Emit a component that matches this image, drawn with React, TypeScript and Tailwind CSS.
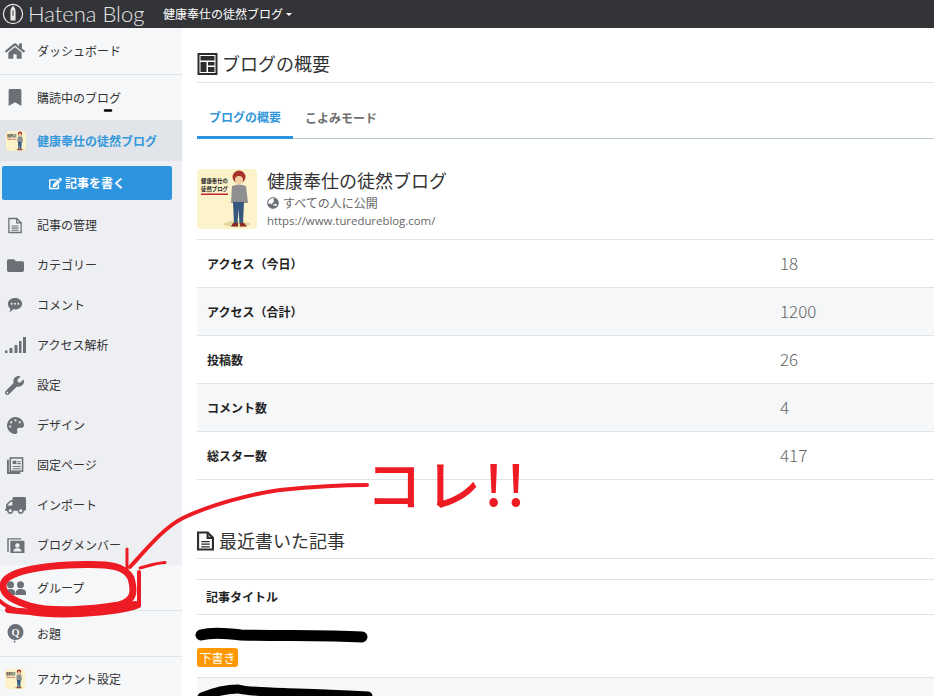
import type { ReactNode } from 'react';
import { FaHome, FaBookmark, FaFolder, FaWrench, FaPalette, FaTruck, FaGlobeAsia, FaEdit } from 'react-icons/fa';

const font = "font-['Noto_Sans_CJK_JP','Noto_Sans',sans-serif]";

function Avatar({ size }: { size: string }) {
  return (
    <svg viewBox="0 0 60 60" className={`${size} rounded shrink-0`}>
      <rect width="60" height="60" fill="#fdf3cb" />
      <text x="4" y="14" fontSize="5.400" fontWeight="700" fill="#222" fontFamily="Noto Sans CJK JP">健康奉仕の</text>
      <text x="4" y="21.500" fontSize="5.400" fontWeight="700" fill="#222" fontFamily="Noto Sans CJK JP">徒然ブログ</text>
      <rect x="4" y="24.500" width="27" height="1.500" fill="#c0272d" />
      <ellipse cx="40" cy="55" rx="13" ry="3" fill="#dfd79a" />
      <circle cx="42" cy="8" r="6.500" fill="#a8322a" />
      <circle cx="42" cy="11" r="4" fill="#f3cfa8" />
      <path d="M35 17q7-3 14 0l2 17h-17z" fill="#8f8f8f" />
      <path d="M36 33h11l-1 22h-3.500l-1-15-1 15h-3.500z" fill="#36587f" />
      <path d="M36 54h5v3.500h-7zM43 54h4l3 3.500h-7z" fill="#8e2a25" />
    </svg>
  );
}

function DocIcon({ className, weight }: { className: string; weight: number }) {
  return (
    <svg viewBox="0 0 16 18" className={className} fill="none" stroke="currentColor" strokeWidth={weight}>
      <path d="M1 1h9l5 5v11H1z" />
      <path d="M10 1v5h5" />
      <path d="M4 9.500h8M4 12h8M4 14.500h8" strokeWidth="1.200" />
    </svg>
  );
}

function LayoutIcon() {
  return (
    <svg viewBox="0 0 20 22" className="w-[21px] h-[22px] text-[#2d2d2d]">
      <rect x="1" y="1" width="18" height="20" fill="none" stroke="currentColor" strokeWidth="2" />
      <path d="M3 3h14v4.500H3zM3 9h6v10H3zM10.500 9h6.500v3.500h-6.500zM10.500 14h6.500v5h-6.500z" fill="currentColor" />
    </svg>
  );
}

function CommentIcon() {
  return (
    <svg viewBox="0 0 18 18" className="w-[16px] h-[16px] ml-[2px]">
      <path d="M9 1c4.700 0 8 2.900 8 6.500S13.700 14 9 14c-.8 0-1.500-.1-2.200-.2C5.700 15.300 4 16.500 2.500 17c.8-1.100 1.200-2.300 1.200-4C2 11.800 1 9.800 1 7.500 1 3.900 4.300 1 9 1z" fill="currentColor" />
      <circle cx="5.300" cy="7.500" r="1.100" fill="#eeeff2" />
      <circle cx="9" cy="7.500" r="1.100" fill="#eeeff2" />
      <circle cx="12.700" cy="7.500" r="1.100" fill="#eeeff2" />
    </svg>
  );
}

function SignalIcon() {
  return (
    <svg viewBox="0 0 21 16" className="w-[21px] h-[16px]" fill="currentColor">
      <rect x="0" y="13.500" width="2.500" height="2.500" />
      <rect x="4.500" y="11" width="3" height="5" />
      <rect x="9.500" y="8" width="3" height="8" />
      <rect x="14" y="4" width="2.500" height="12" />
      <rect x="18" y="0" width="3" height="16" />
    </svg>
  );
}

function PagesIcon() {
  return (
    <svg viewBox="0 0 18 18" className="w-[17px] h-[17px] ml-[2px]" fill="none" stroke="currentColor">
      <path d="M1 3v14h13" strokeWidth="2" />
      <rect x="3.500" y="1" width="13" height="14" strokeWidth="1.600" />
      <rect x="6" y="4" width="4" height="3.500" fill="currentColor" stroke="none" />
      <path d="M11 5h3.500M11 7h3.500M6 10h8.500M6 12.500h8.500" strokeWidth="1.100" />
    </svg>
  );
}

function MemberIcon() {
  return (
    <svg viewBox="0 0 19 17" className="w-[18px] h-[16px] ml-[2px]" fill="none" stroke="currentColor">
      <path d="M1 16V2h14" strokeWidth="1.500" />
      <rect x="3.500" y="4" width="15" height="13" fill="currentColor" stroke="none" />
      <circle cx="11" cy="9" r="2.400" fill="#eeeff2" stroke="none" />
      <path d="M6.500 15.500c.5-3 2.500-3.500 4.500-3.500s4 .5 4.500 3.500z" fill="#eeeff2" stroke="none" />
    </svg>
  );
}

function GroupIcon() {
  return (
    <svg viewBox="0 0 21 14" className="w-[21px] h-[14px]" fill="currentColor">
      <circle cx="5.500" cy="3.800" r="3.500" />
      <circle cx="15.500" cy="3.800" r="3.500" />
      <path d="M0 14v-2.500C0 9 2.500 8 5.500 8S10 9 10.300 11.500V14zM10.700 14v-2.500C11 9 12.500 8 15.500 8s5.500 1 5.500 3.500V14z" />
    </svg>
  );
}

function OdaiIcon() {
  return (
    <svg viewBox="0 0 18 20" className="w-[17px] h-[19px] ml-[2px]">
      <circle cx="9" cy="8.500" r="8.500" fill="currentColor" />
      <circle cx="8" cy="18.500" r="1" fill="currentColor" />
      <text x="9" y="12.500" textAnchor="middle" fontSize="11" fontWeight="700" fill="#f6f7f9" fontFamily="Liberation Serif">Q</text>
    </svg>
  );
}

function HatenaMark() {
  return (
    <svg viewBox="0 0 24 24" className="w-[22px] h-[22px] text-[#e8e8e8] shrink-0">
      <circle cx="12" cy="12" r="10.500" fill="none" stroke="currentColor" strokeWidth="1.300" />
      <path d="M12 3c2 2 2.800 4 2.800 6.500V19H9.200V9.500C9.200 7 10 5 12 3z" fill="currentColor" />
      <path d="M12 8v6" stroke="#333438" strokeWidth="1" />
    </svg>
  );
}

function NavItem({ icon, label, className }: { icon: ReactNode; label: string; className: string }) {
  return (
    <div className={`flex items-center pl-[5px] text-[12px] text-[#333] ${className}`}>
      <span className="w-[32px] shrink-0 flex items-center text-[#6b7076]">{icon}</span>
      <span>{label}</span>
    </div>
  );
}

const stats = [
  { label: 'アクセス（今日）', value: '18' },
  { label: 'アクセス（合計）', value: '1200' },
  { label: '投稿数', value: '26' },
  { label: 'コメント数', value: '4' },
  { label: '総スター数', value: '417' },
];

export default function App() {
  return (
    <div className={`relative w-[934px] h-[696px] overflow-hidden bg-white ${font}`}>
      {/* Header */}
      <header className="h-[28px] bg-[#333438] flex items-center pl-[2px] overflow-hidden">
        <HatenaMark />
        <span className="ml-[4px] w-[135px] text-[22px] leading-none font-light text-[#e4e4e4] font-['Lato',sans-serif]">
          Hatena Blog
        </span>
        <span className="text-[12px] text-white">健康奉仕の徒然ブログ</span>
        <span className="ml-[3px] border-x-[3px] border-t-[3px] border-x-transparent border-t-white" />
      </header>

      <div className="flex h-[668px]">
        {/* Sidebar */}
        <aside className="w-[182px] shrink-0 bg-[#f6f7f9]">
          <NavItem className="h-[47px] border-b border-[#dfe3e6]" icon={<FaHome className="w-[20px] h-[18px]" />} label="ダッシュボード" />
          <NavItem className="h-[45px]" icon={<FaBookmark className="w-[14px] h-[17px] ml-[3px]" />} label="購読中のブログ" />
          <div className="h-[41px] bg-[#e1e5e9] flex items-center pl-[6px] text-[12px] font-bold text-[#3598db]">
            <span className="w-[31px]"><Avatar size="w-[20px] h-[20px]" /></span>
            健康奉仕の徒然ブログ
          </div>
          <div className="bg-[#eeeff2]">
            <div className="px-[2px] pt-[5px] pb-[5px]">
              <div className="w-[170px] h-[34px] bg-[#2d95df] rounded-[2px] flex items-center justify-center gap-[3px] text-[12px] font-bold text-white">
                <FaEdit className="w-[13px] h-[13px]" />
                記事を書く
              </div>
            </div>
            <NavItem className="h-10" icon={<DocIcon weight={1.5} className="w-[14px] h-[17px] ml-[3px]" />} label="記事の管理" />
            <NavItem className="h-10" icon={<FaFolder className="w-[19px] h-[17px] ml-[1px]" />} label="カテゴリー" />
            <NavItem className="h-10" icon={<CommentIcon />} label="コメント" />
            <NavItem className="h-10" icon={<SignalIcon />} label="アクセス解析" />
            <NavItem className="h-10" icon={<FaWrench className="w-[19px] h-[19px]" />} label="設定" />
            <NavItem className="h-10" icon={<FaPalette className="w-[17px] h-[17px] ml-[2px]" />} label="デザイン" />
            <NavItem className="h-10" icon={<PagesIcon />} label="固定ページ" />
            <NavItem className="h-10" icon={<FaTruck className="w-[21px] h-[17px] -scale-x-100" />} label="インポート" />
            <NavItem className="h-10" icon={<MemberIcon />} label="ブログメンバー" />
          </div>
          <NavItem className="h-[46px] border-b border-[#dfe3e6]" icon={<GroupIcon />} label="グループ" />
          <NavItem className="h-[46px] border-b border-[#dfe3e6]" icon={<OdaiIcon />} label="お題" />
          <NavItem className="h-[44px]" icon={<Avatar size="w-[20px] h-[20px]" />} label="アカウント設定" />
        </aside>

        {/* Main */}
        <main className="flex-1 pl-[15px] text-[#333]">
          <h1 className="h-[55px] border-b border-[#dfe3e6] flex items-center gap-[4px] text-[18px] font-normal pt-[17px]">
            <LayoutIcon />
            ブログの概要
          </h1>

          <div className="mt-[15px] h-[41px] flex border-b border-[#b9c9d3] text-[12px] font-bold">
            <div className="w-[96px] h-[41px] border-b-[3px] border-[#2d95df] text-[#3598db] flex items-center justify-center">
              ブログの概要
            </div>
            <div className="pl-[12px] h-[40px] flex items-center text-[#6d6d6d]">こよみモード</div>
          </div>

          <div className="mt-[30px] h-[71px] border-b border-[#dfe3e6] flex gap-[10px]">
            <Avatar size="w-[60px] h-[60px]" />
            <div className="-mt-[2px]">
              <div className="text-[18px] leading-[26px]">健康奉仕の徒然ブログ</div>
              <div className="flex items-center gap-[4px] text-[12px] leading-[18px] text-[#666] mt-[1px]">
                <FaGlobeAsia className="w-[12px] h-[12px] text-[#6b7076]" />
                すべての人に公開
              </div>
              <div className="text-[11.400px] leading-[17px] text-[#666] font-['Open_Sans',sans-serif]">
                https://www.turedureblog.com/
              </div>
            </div>
          </div>

          {stats.map((s, i) => (
            <div
              key={s.label}
              className={`h-[48px] border-b border-[#dfe3e6] flex items-center pl-[10px] ${i % 2 === 1 ? 'bg-[#f5f7f9]' : ''}`}
            >
              <span className="w-[573px] text-[12px] font-bold text-[#222]">{s.label}</span>
              <span className="text-[17px] leading-[20px] -mt-[2px] font-light text-[#666]">{s.value}</span>
            </div>
          ))}

          <h2 className="mt-[43px] h-[36px] border-b border-[#dfe3e6] flex items-center gap-[5px] text-[18px] font-normal">
            <DocIcon weight={2} className="w-[17px] h-[20px] text-[#2d2d2d]" />
            最近書いた記事
          </h2>
          <div className="mt-[20px] h-[36px] border-y border-[#dfe3e6] flex items-center pl-[9px] text-[12px] font-bold text-[#222]">
            記事タイトル
          </div>
          <div className="h-[63px] border-b border-[#dfe3e6] pt-[33px]">
            <span className="flex w-fit items-center h-[19px] px-[2.500px] rounded-[3px] bg-[#ff9800] text-[12px] text-white">
              下書き
            </span>
          </div>
          <div className="h-[40px] bg-[#f5f7f9]" />
        </main>
      </div>

      {/* Hand-drawn markup on top of the screenshot */}
      <svg viewBox="0 0 934 696" className="absolute inset-0 w-[934px] h-[696px] pointer-events-none" fill="none">
        <path d="M105 110.500h6" stroke="#000" strokeWidth="2.500" strokeLinecap="round" />
        <path d="M201 635c10-3 25-2 40 0 40 1 85 0 121 2" stroke="#000" strokeWidth="11" strokeLinecap="round" />
        <path d="M202 697c12-5 24-8 36-8 12 3 30 3 60 4 30 1 50 2 70 3" stroke="#000" strokeWidth="9" strokeLinecap="round" />
        <g stroke="#ed1c24" strokeLinecap="round" strokeLinejoin="round">
          <path d="M3 586C3 572 40 565 85 564.500C110 564 125 566 131 578C135 592 134 601 119 605C90 610 50 612 30 606C15 601 3 596 3 586Z" strokeWidth="7" />
          <path d="M0 601C10 612 40 617 80 615C100 614 125 612 139 606L139 572" strokeWidth="4" />
          <path d="M8 610C30 613 90 613 135 604" strokeWidth="6" />
          <path d="M367 485C340 485 310 487 280 490C250 494 210 505 183 518C165 527 150 545 130 567" strokeWidth="4" />
          <path d="M127 549L127 571M140 568C148 566 156 563 165 562.500" strokeWidth="3" />
        </g>
      </svg>
      <div className="absolute left-[366px] top-[446px] text-[56px] leading-[72px] tracking-[3px] font-medium text-[#ed1c24] whitespace-nowrap pointer-events-none">
        コレ!!
      </div>
    </div>
  );
}
